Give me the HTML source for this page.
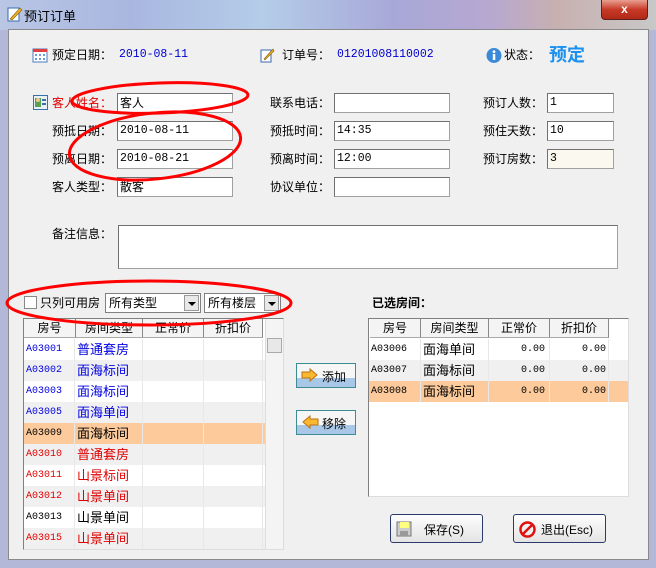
<!DOCTYPE html>
<html><head><meta charset="utf-8"><style>
*{margin:0;padding:0;box-sizing:border-box}
body{width:656px;height:568px;overflow:hidden;position:relative;font:12px "Liberation Sans","Noto Sans CJK SC","WenQuanYi Zen Hei",sans-serif;background:#b4b8d8;color:#000}
.m{font-family:"Liberation Mono","Noto Sans CJK SC",monospace;font-size:11.5px}
.a{position:absolute;white-space:nowrap}
.title{left:0;top:0;width:656px;height:30px;background:linear-gradient(90deg,#b9c6e4,#a9b7e0 20%,#b4cde8 40%,#a8a8d8 60%,#b7a8d0 75%,#c8b0b0 85%,#c8c8c8);}
.client{left:8px;top:29px;width:641px;height:531px;background:#f0f0f0;border:1px solid #8a8a8a}
.inp{position:absolute;height:20px;background:#fff;border:1px solid #a0a0a0;border-top-color:#707070;border-left-color:#707070;padding:1px 2px;line-height:16px}
.lbl{position:absolute;line-height:16px;white-space:nowrap}
.grid{position:absolute;background:#fff;border:1px solid #808080;border-right-color:#ddd;border-bottom-color:#ddd;overflow:hidden}
.row{position:absolute;left:0;height:21px;line-height:21px;width:100%}
.c{position:absolute;top:0;height:100%;padding-left:2px;border-right:1px solid #e8e8e8}
.id{font-family:"Liberation Mono",monospace;font-size:10px}
.hd{position:absolute;top:0;height:19px;line-height:19px;text-align:center;background:#f4f4f4;border-right:1px solid #888;border-bottom:1px solid #aaa}
.btn{position:absolute;border:1px solid #3c8c94;background:linear-gradient(#f6f6f6 60%,#a9c8e8 60%);}
.btn2{position:absolute;border:1px solid #2a3a6a;border-radius:3px;background:linear-gradient(#fdfdfd,#e4e4e4);}
.sel{position:absolute;height:20px;background:#fff;border:1px solid #808080;padding-left:3px;line-height:18px}
.dd{position:absolute;right:1px;top:1px;width:15px;height:16px;background:#e8e8e8;border:1px solid #999}
.dd:after{content:"";position:absolute;left:3px;top:6px;border:4px solid transparent;border-top:4px solid #000}
</style></head><body>
<div class="a title"></div>
<svg class="a" style="left:7px;top:6px" width="16" height="16"><rect x="1" y="2" width="11" height="13" fill="#fff" stroke="#3a6ab0"/><path d="M3 13 L13 2 L15 4 L5 14 Z" fill="#f0b020" stroke="#806010" stroke-width=".6"/></svg>
<div class="a" style="left:24px;top:6px;font-size:13px">预订订单</div>
<div class="a" style="left:601px;top:0;width:47px;height:20px;background:linear-gradient(#e8a090,#c83a28 50%,#b02818);border:1px solid #602020;border-top:none;border-radius:0 0 4px 4px;color:#fff;text-align:center;font-weight:bold;line-height:18px">x</div>
<div class="a client"></div>

<svg class="a" style="left:32px;top:47px" width="16" height="16"><rect x="1" y="2" width="14" height="13" fill="#fff" stroke="#4a7ac0"/><rect x="1" y="2" width="14" height="3" fill="#e04040"/><g fill="#6a9ad8"><rect x="3" y="7" width="2" height="2"/><rect x="7" y="7" width="2" height="2"/><rect x="11" y="7" width="2" height="2"/><rect x="3" y="11" width="2" height="2"/><rect x="7" y="11" width="2" height="2"/><rect x="11" y="11" width="2" height="2"/></g></svg>
<div class="lbl" style="left:52px;top:47px">预定日期：</div>
<div class="lbl m" style="left:119px;top:47px;color:#0000d0">2010-08-11</div>
<svg class="a" style="left:259px;top:47px" width="16" height="16"><rect x="2" y="3" width="10" height="12" fill="#fff" stroke="#3a6ab0"/><path d="M5 12 L14 2 L15 4 L6 13 Z" fill="#f0b020" stroke="#806010" stroke-width=".6"/></svg>
<div class="lbl" style="left:282px;top:47px">订单号：</div>
<div class="lbl m" style="left:337px;top:47px;color:#0000d0">01201008110002</div>
<svg class="a" style="left:486px;top:47px" width="16" height="17"><circle cx="8" cy="8.5" r="7.5" fill="#3a8ad8"/><rect x="6.8" y="7" width="2.5" height="6" fill="#fff"/><circle cx="8" cy="4.7" r="1.4" fill="#fff"/></svg>
<div class="lbl" style="left:504px;top:47px">状态：</div>
<div class="lbl" style="left:549px;top:44px;color:#1a90f0;font-size:18px;font-weight:bold;line-height:22px">预定</div>

<svg class="a" style="left:33px;top:95px" width="15" height="15"><rect x=".5" y=".5" width="14" height="14" fill="#e8f0f8" stroke="#3a70a8"/><rect x="2" y="3" width="6" height="9" fill="#5aa050"/><circle cx="5" cy="5" r="2" fill="#f0c890"/><rect x="9" y="4" width="4" height="2" fill="#3a70a8"/><rect x="9" y="8" width="4" height="2" fill="#3a70a8"/></svg>
<div class="lbl" style="left:52px;top:95px;color:#e00000">客人姓名：</div>
<div class="lbl" style="left:52px;top:123px">预抵日期：</div>
<div class="lbl" style="left:52px;top:151px">预离日期：</div>
<div class="lbl" style="left:52px;top:179px">客人类型：</div>
<div class="inp" style="left:117px;top:93px;width:116px">客人</div>
<div class="inp m" style="left:117px;top:121px;width:116px">2010-08-11</div>
<div class="inp m" style="left:117px;top:149px;width:116px">2010-08-21</div>
<div class="inp" style="left:117px;top:177px;width:116px">散客</div>

<div class="lbl" style="left:270px;top:95px">联系电话：</div>
<div class="lbl" style="left:270px;top:123px">预抵时间：</div>
<div class="lbl" style="left:270px;top:151px">预离时间：</div>
<div class="lbl" style="left:270px;top:179px">协议单位：</div>
<div class="inp" style="left:334px;top:93px;width:116px"></div>
<div class="inp m" style="left:334px;top:121px;width:116px">14:35</div>
<div class="inp m" style="left:334px;top:149px;width:116px">12:00</div>
<div class="inp" style="left:334px;top:177px;width:116px"></div>

<div class="lbl" style="left:483px;top:95px">预订人数：</div>
<div class="lbl" style="left:483px;top:123px">预住天数：</div>
<div class="lbl" style="left:483px;top:151px">预订房数：</div>
<div class="inp m" style="left:547px;top:93px;width:67px">1</div>
<div class="inp m" style="left:547px;top:121px;width:67px">10</div>
<div class="inp m" style="left:547px;top:149px;width:67px;background:#fbf8f0">3</div>

<div class="lbl" style="left:52px;top:226px">备注信息：</div>
<div class="inp" style="left:118px;top:225px;width:500px;height:44px"></div>

<div class="a" style="left:24px;top:296px;width:13px;height:13px;background:#fff;border:1px solid #888"></div>
<div class="lbl" style="left:40px;top:295px">只列可用房</div>
<div class="sel" style="left:105px;top:293px;width:96px">所有类型<div class="dd"></div></div>
<div class="sel" style="left:204px;top:293px;width:77px">所有楼层<div class="dd"></div></div>

<div class="grid" style="left:23px;top:318px;width:261px;height:232px">
<div class="hd" style="left:0;width:52px">房号</div><div class="hd" style="left:52px;width:67px">房间类型</div><div class="hd" style="left:119px;width:61px">正常价</div><div class="hd" style="left:180px;width:59px">折扣价</div>
<div class="a" style="left:241px;top:0;width:18px;height:230px;background:#f4f4f4;border-left:1px solid #ddd"><div class="a" style="left:1px;top:19px;width:15px;height:15px;border:1px solid #aaa;background:#e8e8e8"></div></div>
<div id="L"></div>
</div>

<div class="lbl" style="left:372px;top:295px;font-weight:bold">已选房间：</div>
<div class="grid" style="left:368px;top:318px;width:261px;height:179px">
<div class="hd" style="left:1px;width:51px">房号</div><div class="hd" style="left:52px;width:68px">房间类型</div><div class="hd" style="left:120px;width:61px">正常价</div><div class="hd" style="left:181px;width:59px">折扣价</div>
<div class="row" style="top:20px"><div class="c id" style="left:0;width:52px">A03006</div><div class="c" style="left:52px;width:68px;font-size:13px">面海单间</div><div class="c id" style="left:120px;width:61px;text-align:right;padding-right:4px">0.00</div><div class="c id" style="left:181px;width:59px;text-align:right;padding-right:2px">0.00</div></div>
<div class="row" style="top:41px;background:#f0f0f0"><div class="c id" style="left:0;width:52px">A03007</div><div class="c" style="left:52px;width:68px;font-size:13px">面海标间</div><div class="c id" style="left:120px;width:61px;text-align:right;padding-right:4px">0.00</div><div class="c id" style="left:181px;width:59px;text-align:right;padding-right:2px">0.00</div></div>
<div class="row" style="top:62px;background:#fdcb9b"><div class="c id" style="left:0;width:52px">A03008</div><div class="c" style="left:52px;width:68px;font-size:13px">面海标间</div><div class="c id" style="left:120px;width:61px;text-align:right;padding-right:4px">0.00</div><div class="c id" style="left:181px;width:59px;text-align:right;padding-right:2px">0.00</div></div>
</div>

<div class="btn" style="left:296px;top:363px;width:60px;height:25px"><svg class="a" style="left:4px;top:4px" width="18" height="14"><path d="M1 4 H9 V1 L16 7 L9 13 V10 H1 Z" fill="#f8b830" stroke="#c07010"/></svg><span class="a" style="left:25px;top:4px">添加</span></div>
<div class="btn" style="left:296px;top:410px;width:60px;height:25px"><svg class="a" style="left:4px;top:4px" width="18" height="14"><path d="M17 4 H9 V1 L2 7 L9 13 V10 H17 Z" fill="#f8b830" stroke="#c07010"/></svg><span class="a" style="left:25px;top:4px">移除</span></div>

<div class="btn2" style="left:390px;top:514px;width:93px;height:29px"><svg class="a" style="left:5px;top:6px" width="16" height="16"><rect x="1" y="1" width="14" height="14" fill="#ccc" stroke="#777"/><rect x="4" y="1" width="9" height="6" fill="#ffff80"/><rect x="4" y="10" width="8" height="5" fill="#999"/></svg><span class="a" style="left:33px;top:6px">保存(S)</span></div>
<div class="btn2" style="left:513px;top:514px;width:93px;height:29px"><svg class="a" style="left:5px;top:6px" width="17" height="17"><circle cx="8.5" cy="8.5" r="7" fill="none" stroke="#e01010" stroke-width="2.5"/><path d="M4 13 L13 4" stroke="#e01010" stroke-width="2.5"/></svg><span class="a" style="left:27px;top:6px">退出(Esc)</span></div>

<svg class="a" style="left:0;top:0;pointer-events:none" width="656" height="568"><g fill="none" stroke="#ff0000" stroke-width="3"><ellipse cx="160" cy="98" rx="88" ry="15" transform="rotate(-2 160 98)"/><ellipse cx="155" cy="146" rx="86" ry="33" transform="rotate(-6 155 146)"/><ellipse cx="149" cy="303" rx="142" ry="22"/></g></svg>

<script>
var d=[["A03001","普通套房","#0000e0"],["A03002","面海标间","#0000e0"],["A03003","面海标间","#0000e0"],["A03005","面海单间","#0000e0"],["A03009","面海标间","#000",1],["A03010","普通套房","#e00000"],["A03011","山景标间","#e00000"],["A03012","山景单间","#e00000"],["A03013","山景单间","#000"],["A03015","山景单间","#e00000"]];
var h="";d.forEach(function(r,i){var bg=r[3]?"#fdcb9b":(i%2?"#f0f0f0":"#fff");h+='<div class="row" style="top:'+(20+i*21)+'px;width:241px;background:'+bg+';color:'+r[2]+'"><div class="c id" style="left:0;width:51px">'+r[0]+'</div><div class="c" style="left:51px;width:68px;font-size:13px">'+r[1]+'</div><div class="c" style="left:119px;width:61px"></div><div class="c" style="left:180px;width:59px"></div></div>';});
document.getElementById("L").innerHTML=h;
</script>
</body></html>
